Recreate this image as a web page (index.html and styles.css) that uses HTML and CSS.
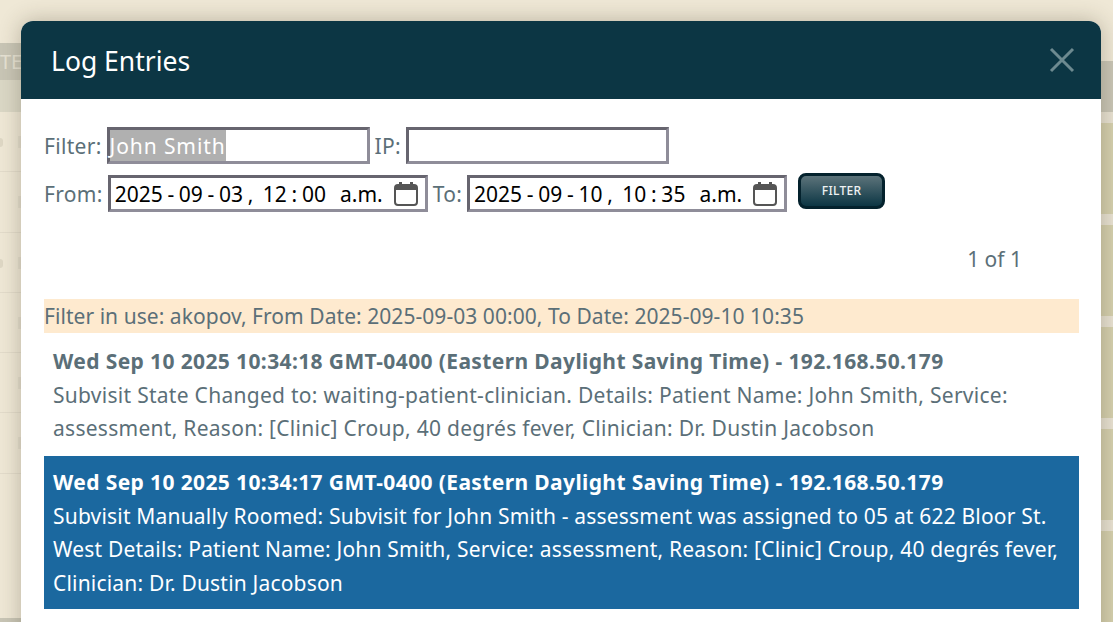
FILE: index.html
```html
<!DOCTYPE html>
<html lang="en">
<head>
<meta charset="utf-8">
<title>Log Entries</title>
<link rel="stylesheet" href="styles.css">
</head>
<body>
<div class="backdrop">
  <div class="bg-left">
    <div class="bg-top"></div>
    <div class="bg-head">TE</div>
    <div class="bg-sub"></div>
    <div class="bg-row"><span class="bg-glyph"></span><span class="bg-mark"></span></div>
    <div class="bg-row"><span class="bg-mark"></span></div>
    <div class="bg-row"><span class="bg-glyph"></span><span class="bg-mark"></span></div>
    <div class="bg-row"><span class="bg-mark"></span></div>
    <div class="bg-row"><span class="bg-mark"></span></div>
    <div class="bg-row"><span class="bg-mark"></span></div>
    <div class="bg-space"></div>
    <div class="bg-foot"></div>
  </div>
  <div class="bg-right">
    <div class="bg-right-top"></div>
    <div class="bg-right-head"></div>
    <div class="bg-band"></div>
    <div class="bg-band"></div>
    <div class="bg-band"></div>
    <div class="bg-band"></div>
    <div class="bg-band"></div>
  </div>
</div>
<section class="modal">
  <header class="modal-head">
    <h1 class="modal-title">Log Entries</h1>
    <svg class="close" viewBox="0 0 26 26" width="26" height="26" aria-label="Close"><path d="M2 2L24 24M24 2L2 24" fill="none" stroke="#6d8a90" stroke-width="3"/></svg>
  </header>
  <div class="modal-body">
    <div class="form-row row-one">
      <label class="lbl" for="f">Filter:</label>
      <div class="input text-input" id="f"><span class="selected">John Smith</span></div>
      <label class="lbl" for="ip">IP:</label>
      <div class="input text-input" id="ip"></div>
    </div>
    <div class="form-row row-two">
      <label class="lbl">From:</label>
      <div class="input date-input"><span class="dt">2025 - 09 - 03 ,&nbsp; 12 : 00 &nbsp; a.m.</span>
        <svg class="cal" viewBox="0 0 24 24" width="24" height="24"><rect x="1" y="3" width="22" height="20" rx="3" fill="none" stroke="#555" stroke-width="2"/><path d="M1 4h22v4H1zM5 0h3v5H5zM16 0h3v5h-3z" fill="#555"/></svg>
      </div>
      <label class="lbl">To:</label>
      <div class="input date-input"><span class="dt">2025 - 09 - 10 ,&nbsp; 10 : 35 &nbsp; a.m.</span>
        <svg class="cal" viewBox="0 0 24 24" width="24" height="24"><rect x="1" y="3" width="22" height="20" rx="3" fill="none" stroke="#555" stroke-width="2"/><path d="M1 4h22v4H1zM5 0h3v5H5zM16 0h3v5h-3z" fill="#555"/></svg>
      </div>
      <button class="filter-btn" type="button">FILTER</button>
    </div>
    <div class="pager">1 of 1</div>
    <div class="filter-note">Filter in use: akopov, From Date: 2025-09-03 00:00, To Date: 2025-09-10 10:35</div>
    <article class="entry">
      <strong class="entry-title">Wed Sep 10 2025 10:34:18 GMT-0400 (Eastern Daylight Saving Time) - 192.168.50.179</strong>
      <p class="entry-text">Subvisit State Changed to: waiting-patient-clinician. Details: Patient Name: John Smith, Service: assessment, Reason: [Clinic] Croup, 40 degrés fever, Clinician: Dr. Dustin Jacobson</p>
    </article>
    <article class="entry active">
      <strong class="entry-title">Wed Sep 10 2025 10:34:17 GMT-0400 (Eastern Daylight Saving Time) - 192.168.50.179</strong>
      <p class="entry-text">Subvisit Manually Roomed: Subvisit for John Smith - assessment was assigned to 05 at 622 Bloor St. West Details: Patient Name: John Smith, Service: assessment, Reason: [Clinic] Croup, 40 degrés fever, Clinician: Dr. Dustin Jacobson</p>
    </article>
  </div>
</section>
</body>
</html>
```
FILE: styles.css
```css
* { box-sizing: border-box; }
html, body { margin: 0; height: 100%; overflow: hidden; }
body { font-family: "Noto Sans", "Open Sans", sans-serif; font-size: 21px; color: #5b6f78; background: #efe8d6; }

.backdrop { position: absolute; inset: 0; overflow: hidden; display: flex; justify-content: space-between; background: #efe8d6; }
.bg-left { width: 21px; display: flex; flex-direction: column; }
.bg-top { height: 43px; }
.bg-head { height: 37px; background: #c9c6b6; color: #e6e2d3; font-size: 20px; line-height: 37px; white-space: nowrap; overflow: hidden; }
.bg-sub { height: 32px; background: #dbd8c6; }
.bg-row { height: 60.3px; border-bottom: 1px solid #e3dccb; position: relative; overflow: hidden; }
.bg-glyph { position: absolute; left: 0; top: 26px; width: 3px; height: 9px; border-radius: 0 3px 3px 0; background: #dfd8c5; }
.bg-mark { position: absolute; left: 18px; top: 24px; width: 3px; height: 12px; background: #e4decd; }
.bg-space { height: 144px; }
.bg-foot { height: 4px; background: #c9c6b6; }
.bg-right { width: 12px; display: flex; flex-direction: column; }
.bg-right-top { height: 96px; }
.bg-right-head { height: 81px; background: #c9c6b6; }
.bg-band { flex: none; height: 102px; background: linear-gradient(#e8e2d2 11px, #d5d0ae 11px); }

.modal { position: absolute; left: 21px; top: 21px; width: 1080px; height: 640px; background: #fff; border-radius: 12px 12px 0 0; box-shadow: 0 0 22px rgba(60, 50, 30, .3); overflow: hidden; }
.modal-head { height: 78px; background: #0c3644; display: flex; align-items: center; justify-content: space-between; padding: 0 26px 0 30px; }
.modal-title { margin: 0; padding-top: 2px; color: #fff; font-size: 26.5px; font-weight: 400; }
.close { display: block; }

.modal-body { padding: 28px 22px 0 23px; }
.form-row { display: flex; align-items: center; }
.row-one { height: 37px; gap: 5px; }
.row-two { height: 37px; margin-top: 11px; gap: 5px; }
.lbl { padding-top: 2px; line-height: 1; letter-spacing: .3px; }
.input { height: 37px; background: #fff; border: 3px solid; border-color: #67656f #8f8d99 #8f8d99 #67656f; color: #000; display: flex; align-items: center; }
.text-input { width: 263px; color: #fff; letter-spacing: .9px; }
.selected { display: block; height: 31px; background: #b0b0b0; line-height: 33px; }
.date-input { width: 320px; padding: 0 7px 0 4px; justify-content: space-between; }
.dt { white-space: nowrap; word-spacing: -.75px; }
.cal { display: block; }
.filter-btn { margin: -6px 0 0 6px; width: 87px; height: 36px; border: 3px solid #04222d; border-radius: 8px; background: linear-gradient(#5c737a, #0c3644); color: #eef2f3; font-family: inherit; font-size: 12px; font-weight: 500; letter-spacing: .3px; padding: 0; }

.pager { margin-top: 32px; height: 30px; padding-right: 57px; text-align: right; line-height: 30px; }
.filter-note { margin-top: 25px; height: 34px; line-height: 34px; background: #feeacf; white-space: nowrap; letter-spacing: .05px; }
.entry { margin: 2px 0 1.5px; padding: 9.5px 9px 9px; line-height: 33.5px; letter-spacing: .28px; }
.entry-title { display: block; font-weight: 700; white-space: nowrap; letter-spacing: .38px; }
.entry-text { margin: .5px 0 0; }
.active { margin: 0; background: #1b689f; color: #fff; letter-spacing: .19px; }
```
